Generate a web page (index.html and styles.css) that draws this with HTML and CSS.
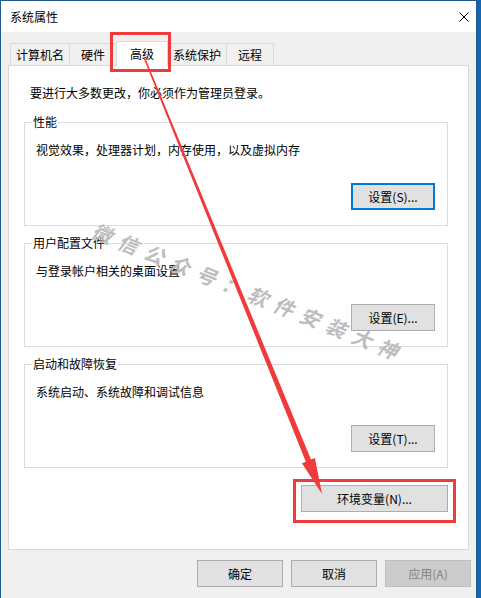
FILE: index.html
```html
<!DOCTYPE html>
<html lang="zh-CN">
<head>
    <meta charset="UTF-8">
    <title>系统属性</title>
    <link rel="stylesheet" href="styles.css">
</head>
<body>
    <div class="window">
        <div class="titlebar">
            <span class="title">系统属性</span>
            <svg class="close" width="10" height="10" viewBox="0 0 10 10">
                <path d="M0.5 0.5 L9.5 9.5 M9.5 0.5 L0.5 9.5" stroke="#000" stroke-width="1" fill="none"/>
            </svg>
        </div>

        <div class="client">
            <div class="tabs">
                <div class="tab">计算机名</div>
                <div class="tab">硬件</div>
                <div class="tab active">高级<span class="mark mark-tab"></span></div>
                <div class="tab">系统保护</div>
                <div class="tab">远程</div>
            </div>

            <div class="panel">
                <p class="intro">要进行大多数更改，你必须作为管理员登录。</p>

                <fieldset class="group">
                    <legend>性能</legend>
                    <p class="desc">视觉效果，处理器计划，内存使用，以及虚拟内存</p>
                    <div class="group-actions">
                        <button class="btn btn-default">设置(S)...</button>
                    </div>
                </fieldset>

                <fieldset class="group">
                    <legend>用户配置文件</legend>
                    <p class="desc">与登录帐户相关的桌面设置</p>
                    <div class="group-actions">
                        <button class="btn">设置(E)...</button>
                    </div>
                </fieldset>

                <fieldset class="group">
                    <legend>启动和故障恢复</legend>
                    <p class="desc">系统启动、系统故障和调试信息</p>
                    <div class="group-actions">
                        <button class="btn">设置(T)...</button>
                    </div>
                </fieldset>

                <div class="panel-actions">
                    <div class="env-wrap">
                        <button class="btn btn-wide">环境变量(N)...</button>
                        <span class="mark mark-env"></span>
                    </div>
                </div>
            </div>

            <div class="dialog-actions">
                <button class="btn">确定</button>
                <button class="btn">取消</button>
                <button class="btn" disabled>应用(A)</button>
            </div>
        </div>
    </div>

    <!-- watermark + annotation arrow -->
    <svg class="overlay" width="481" height="598" viewBox="0 0 481 598">
        <text class="watermark" x="249" y="292" transform="rotate(22 249 292)" text-anchor="middle" dominant-baseline="central">微信公众号：软件安装大神</text>
        <polygon class="arrow" points="144.74,56.70 311.01,459.60 314.90,458.02 322,494 301.94,463.30 305.83,461.72 143.26,57.30"/>
    </svg>
</body>
</html>
```

FILE: styles.css
```css
:root {
    --face: #f0f0f0;
    --line: #d9d9d9;
    --btn-face: #e1e1e1;
    --btn-line: #adadad;
    --focus: #0078d7;
    --mark: #ef3b3b;
}

body {
    margin: 0;
    width: 481px;
    height: 598px;
    overflow: hidden;
    position: relative;
    background: #1565b0;
    font-family: "Noto Sans CJK SC", "Noto Sans", sans-serif;
    font-size: 12px;
    line-height: 16px;
    color: #000;
}

.window {
    width: 477px;
    height: 598px;
    box-sizing: border-box;
    border: 1px solid #1f5a8a;
    border-bottom: 0;
    background: var(--face);
    display: flex;
    flex-direction: column;
}

.titlebar {
    height: 31px;
    flex: none;
    background: #fff;
    display: flex;
    align-items: center;
    justify-content: space-between;
    padding: 0 7px 0 9px;
}

.close {
    display: block;
}

.client {
    flex: 1;
    padding: 0 7px;
    display: flex;
    flex-direction: column;
}

.tabs {
    display: flex;
    align-items: flex-end;
    margin: 9px 0 -1px 2px;
    position: relative;
    z-index: 1;
}

.tab {
    height: 22px;
    margin-bottom: 1px;
    box-sizing: border-box;
    min-width: 48px;
    padding: 0 5px;
    border: 1px solid var(--line);
    border-bottom: 0;
    margin-left: -1px;
    display: flex;
    align-items: center;
    justify-content: center;
    background: var(--face);
}

.tab:first-child {
    margin-left: 0;
}

.tab.active {
    height: 25px;
    margin-bottom: 0;
    min-width: 52px;
    background: #fff;
    position: relative;
    z-index: 1;
}

.panel {
    height: 485px;
    box-sizing: border-box;
    border: 1px solid var(--line);
    background: #fff;
    padding: 0 20px 0 15px;
}

.intro {
    margin: 19px 0 13px 6px;
}

.group {
    margin: 0 0 9px;
    padding: 12px 12px 15px 11px;
    border: 1px solid #dcdcdc;
    min-width: 0;
}

.group legend {
    padding: 0 1px;
    margin-left: -4px;
    line-height: 16px;
}

.desc {
    margin: 0;
}

.group-actions {
    display: flex;
    justify-content: flex-end;
    margin-top: 25px;
}

.panel-actions {
    display: flex;
    justify-content: flex-end;
    margin-top: 17px;
}

.env-wrap {
    position: relative;
    display: flex;
}

.btn {
    height: 27px;
    width: 84px;
    box-sizing: border-box;
    border: 1px solid var(--btn-line);
    background: var(--btn-face);
    font: inherit;
    color: #000;
    padding: 0;
}

.btn-default {
    border: 2px solid var(--focus);
}

.btn-wide {
    width: 147px;
}

.btn:disabled {
    background: #cccccc;
    border-color: #bfbfbf;
    color: #838383;
}

.dialog-actions {
    display: flex;
    justify-content: flex-end;
    gap: 8px;
    margin: 10px -2px 0 0;
}

.dialog-actions .btn {
    width: 86px;
}

/* red annotation boxes */
.mark {
    position: absolute;
    border: 3px solid var(--mark);
    pointer-events: none;
}

.mark-tab {
    top: -10px;
    left: -7px;
    right: -4px;
    bottom: -6px;
}

.mark-env {
    top: -6px;
    left: -8px;
    right: -8px;
    bottom: -11px;
}

.overlay {
    position: absolute;
    top: 0;
    left: 0;
    z-index: 5;
    pointer-events: none;
}

.watermark {
    font-family: "Noto Sans CJK SC", sans-serif;
    font-size: 20px;
    font-weight: 700;
    font-style: italic;
    letter-spacing: 8px;
    fill: #bdbdbd;
}

.arrow {
    fill: var(--mark);
}
```
